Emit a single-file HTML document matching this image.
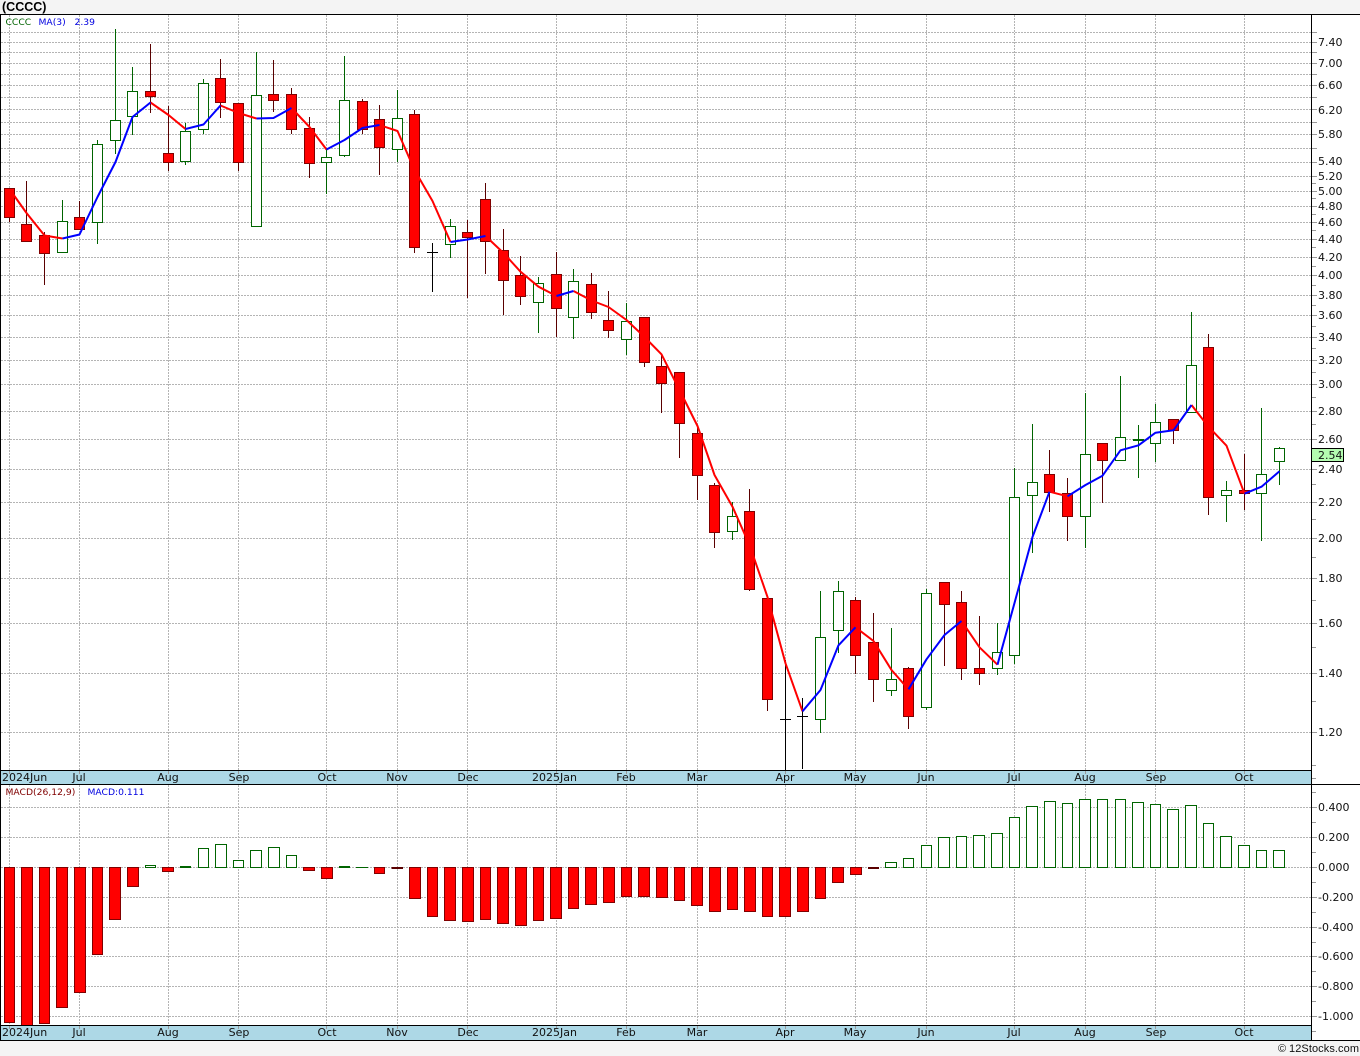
<!DOCTYPE html>
<html><head><meta charset="utf-8"><title>(CCCC)</title>
<style>
html,body{margin:0;padding:0;background:#f4f4f4;overflow:hidden}
svg{display:block}
text{font-family:"DejaVu Sans",sans-serif;font-size:11px;fill:#111}
.s text{font-size:9.2px}
</style></head><body>
<svg width="1360" height="1056" viewBox="0 0 1360 1056" xmlns="http://www.w3.org/2000/svg">
<rect width="1360" height="1056" fill="#f4f4f4"/>
<rect x="0" y="14" width="1360" height="1027" fill="#fff"/>
<g shape-rendering="crispEdges">
<!-- horizontal grid price -->
<path fill="none" stroke="#b4b4b4" stroke-dasharray="2 1" d="M1 32.5H1311M1 42.5H1311M1 52.5H1311M1 63.5H1311M1 74.5H1311M1 85.5H1311M1 97.5H1311M1 109.5H1311M1 122.5H1311M1 134.5H1311M1 148.5H1311M1 162.5H1311M1 176.5H1311M1 191.5H1311M1 206.5H1311M1 222.5H1311M1 239.5H1311M1 257.5H1311M1 275.5H1311M1 295.5H1311M1 315.5H1311M1 337.5H1311M1 360.5H1311M1 384.5H1311M1 411.5H1311M1 439.5H1311M1 469.5H1311M1 502.5H1311M1 538.5H1311M1 578.5H1311M1 623.5H1311M1 673.5H1311M1 732.5H1311
M1 807.5H1311M1 837.5H1311M1 867.5H1311M1 897.5H1311M1 927.5H1311M1 956.5H1311M1 986.5H1311M1 1016.5H1311"/>
<!-- vertical grid -->
<path fill="none" stroke="#b4b4b4" stroke-dasharray="2 1" d="M9.5 15V770M79.5 15V770M168.5 15V770M238.5 15V770M326.5 15V770M397.5 15V770M467.5 15V770M556.5 15V770M626.5 15V770M697.5 15V770M785.5 15V770M855.5 15V770M926.5 15V770M1014.5 15V770M1085.5 15V770M1155.5 15V770M1244.5 15V770
M9.5 785V1025M79.5 785V1025M168.5 785V1025M238.5 785V1025M326.5 785V1025M397.5 785V1025M467.5 785V1025M556.5 785V1025M626.5 785V1025M697.5 785V1025M785.5 785V1025M855.5 785V1025M926.5 785V1025M1014.5 785V1025M1085.5 785V1025M1155.5 785V1025M1244.5 785V1025"/>
<!-- wicks -->
<path fill="none" stroke="#5a0000" d="M9.5 188V222M26.5 181V241M44.5 232V285M79.5 201V230M150.5 44V113M168.5 106V171M220.5 59V118M238.5 103V171M273.5 60V112M291.5 88V134M309.5 117V178M362.5 99V134M379.5 105V175M414.5 110V253M467.5 220V298M485.5 183V274M503.5 229V315M520.5 256V305M556.5 252V337M591.5 273V319M608.5 291V338M644.5 317V367M661.5 355V413M679.5 372V458M697.5 427V500M714.5 483V548M749.5 489V591M767.5 598V711M855.5 597V674M873.5 613V702M908.5 667V729M944.5 582V666M961.5 591V680M979.5 616V685M1049.5 450V512M1067.5 478V541M1102.5 443V503M1173.5 419V444M1208.5 334V515M1244.5 454V510"/>
<path fill="none" stroke="#006400" d="M62.5 200V252M97.5 140V244M115.5 29V154M132.5 67V135M185.5 123V165M203.5 79V134M256.5 52V226M326.5 148V194M344.5 56V157M397.5 90V162M450.5 219V258M538.5 277V333M573.5 269V339M626.5 303V355M732.5 502V540M820.5 591V733M838.5 581V653M891.5 628V696M926.5 589V710M997.5 623V675M1014.5 468V664M1032.5 424V553M1085.5 393V548M1120.5 376V460M1138.5 425V478M1155.5 404V462M1191.5 312V413M1226.5 481V522M1261.5 408V541M1279.5 447V485"/>
<path fill="none" stroke="#000" d="M432.5 243V292M427 252.5H438M785.5 660V770M780 719.5H791M802.5 698V769M797 716.5H808"/>
<!-- red bodies -->
<path fill="#f00" stroke="#800000" d="M4.5 188.5h10v29h-10zM21.5 224.5h10v17h-10zM39.5 235.5h10v18h-10zM74.5 217.5h10v12h-10zM145.5 91.5h10v5h-10zM163.5 153.5h10v9h-10zM215.5 78.5h10v24h-10zM233.5 103.5h10v59h-10zM268.5 94.5h10v6h-10zM286.5 94.5h10v35h-10zM304.5 128.5h10v35h-10zM357.5 101.5h10v28h-10zM374.5 119.5h10v28h-10zM409.5 114.5h10v133h-10zM462.5 232.5h10v5h-10zM480.5 199.5h10v42h-10zM498.5 250.5h10v30h-10zM515.5 275.5h10v21h-10zM551.5 274.5h10v34h-10zM586.5 284.5h10v28h-10zM603.5 320.5h10v10h-10zM639.5 317.5h10v45h-10zM656.5 366.5h10v17h-10zM674.5 372.5h10v51h-10zM692.5 433.5h10v42h-10zM709.5 485.5h10v47h-10zM744.5 511.5h10v78h-10zM762.5 598.5h10v101h-10zM850.5 600.5h10v55h-10zM868.5 642.5h10v37h-10zM903.5 668.5h10v48h-10zM939.5 582.5h10v22h-10zM956.5 602.5h10v66h-10zM974.5 668.5h10v5h-10zM1044.5 474.5h10v18h-10zM1062.5 493.5h10v23h-10zM1097.5 443.5h10v17h-10zM1168.5 419.5h10v11h-10zM1203.5 347.5h10v150h-10zM1239.5 490.5h10v3h-10z"/>
<!-- green bodies -->
<path fill="#fff" stroke="#006400" d="M57.5 221.5h10v31h-10zM92.5 144.5h10v78h-10zM110.5 120.5h10v20h-10zM127.5 91.5h10v25h-10zM180.5 131.5h10v30h-10zM198.5 83.5h10v46h-10zM251.5 95.5h10v131h-10zM321.5 157.5h10v5h-10zM339.5 100.5h10v55h-10zM392.5 118.5h10v31h-10zM445.5 226.5h10v18h-10zM533.5 283.5h10v19h-10zM568.5 281.5h10v36h-10zM621.5 321.5h10v18h-10zM727.5 516.5h10v15h-10zM815.5 637.5h10v82h-10zM833.5 591.5h10v39h-10zM886.5 679.5h10v11h-10zM921.5 593.5h10v114h-10zM992.5 652.5h10v16h-10zM1009.5 497.5h10v158h-10zM1027.5 482.5h10v13h-10zM1080.5 454.5h10v62h-10zM1115.5 437.5h10v23h-10zM1150.5 422.5h10v21h-10zM1186.5 365.5h10v47h-10zM1221.5 490.5h10v5h-10zM1256.5 474.5h10v19h-10zM1274.5 448.5h10v13h-10z"/>
<path fill="none" stroke="#006400" stroke-width="2" d="M1133 440H1144"/>
<!-- MACD red -->
<path fill="#f00" stroke="#800000" d="M4.5 867.5H14.5V1022.5H4.5zM21.5 867.5H32.5V1026H21.5zM39.5 867.5H49.5V1023.5H39.5zM56.5 867.5H67.5V1007.5H56.5zM74.5 867.5H85.5V992.5H74.5zM92.5 867.5H102.5V954.5H92.5zM109.5 867.5H120.5V919.5H109.5zM127.5 867.5H138.5V886.5H127.5zM162.5 867.5H173.5V871.5H162.5zM303.5 867.5H314.5V870.5H303.5zM321.5 867.5H332.5V878.5H321.5zM374.5 867.5H384.5V873.5H374.5zM409.5 867.5H420.5V898.5H409.5zM427.5 867.5H437.5V916.5H427.5zM444.5 867.5H455.5V920.5H444.5zM462.5 867.5H473.5V921.5H462.5zM480.5 867.5H490.5V919.5H480.5zM497.5 867.5H508.5V923.5H497.5zM515.5 867.5H526.5V925.5H515.5zM533.5 867.5H543.5V920.5H533.5zM550.5 867.5H561.5V918.5H550.5zM568.5 867.5H578.5V908.5H568.5zM585.5 867.5H596.5V904.5H585.5zM603.5 867.5H614.5V902.5H603.5zM621.5 867.5H631.5V896.5H621.5zM638.5 867.5H649.5V896.5H638.5zM656.5 867.5H667.5V897.5H656.5zM674.5 867.5H684.5V900.5H674.5zM691.5 867.5H702.5V905.5H691.5zM709.5 867.5H720.5V911.5H709.5zM727.5 867.5H737.5V909.5H727.5zM744.5 867.5H755.5V911.5H744.5zM762.5 867.5H772.5V916.5H762.5zM779.5 867.5H790.5V916.5H779.5zM797.5 867.5H808.5V911.5H797.5zM815.5 867.5H825.5V898.5H815.5zM832.5 867.5H843.5V882.5H832.5zM850.5 867.5H861.5V874.5H850.5z"/>
<path fill="none" stroke="#5a0000" stroke-width="2" d="M391.5 868H403M868 868H879"/>
<!-- MACD green -->
<path fill="#fff" stroke="#006400" d="M145.5 865.5H155.5V867.5H145.5zM198.5 848.5H208.5V867.5H198.5zM215.5 844.5H226.5V867.5H215.5zM233.5 860.5H243.5V867.5H233.5zM250.5 850.5H261.5V867.5H250.5zM268.5 847.5H279.5V867.5H268.5zM286.5 855.5H296.5V867.5H286.5zM885.5 862.5H896.5V867.5H885.5zM903.5 858.5H913.5V867.5H903.5zM921.5 845.5H931.5V867.5H921.5zM938.5 837.5H949.5V867.5H938.5zM956.5 836.5H966.5V867.5H956.5zM973.5 835.5H984.5V867.5H973.5zM991.5 833.5H1002.5V867.5H991.5zM1009.5 817.5H1019.5V867.5H1009.5zM1026.5 806.5H1037.5V867.5H1026.5zM1044.5 801.5H1055.5V867.5H1044.5zM1062.5 803.5H1072.5V867.5H1062.5zM1079.5 799.5H1090.5V867.5H1079.5zM1097.5 799.5H1107.5V867.5H1097.5zM1115.5 799.5H1125.5V867.5H1115.5zM1132.5 802.5H1143.5V867.5H1132.5zM1150.5 804.5H1160.5V867.5H1150.5zM1167.5 809.5H1178.5V867.5H1167.5zM1185.5 805.5H1196.5V867.5H1185.5zM1203.5 823.5H1213.5V867.5H1203.5zM1220.5 836.5H1231.5V867.5H1220.5zM1238.5 845.5H1249.5V867.5H1238.5zM1256.5 850.5H1266.5V867.5H1256.5zM1273.5 850.5H1284.5V867.5H1273.5z"/>
<path fill="none" stroke="#006400" stroke-width="2" d="M180 867H191M339 867H350"/>
<path fill="none" stroke="#006400" d="M356 867.5H368"/>
</g>
<!-- MA lines -->
<g fill="none" stroke-width="2" stroke-linejoin="round" stroke-linecap="butt">
<g stroke="#f00">
<polyline points="13,194 26.5,213 44.5,235.5 62.5,238.5"/>
<polyline points="150.5,102.5 168.5,115 185.5,129"/>
<polyline points="220.5,105.5 238.5,113 256.5,118.5"/>
<polyline points="291.5,108 309.5,127 326.5,149.5"/>
<polyline points="379.5,125 397.5,131 414.5,170 432.5,201 450.5,242"/>
<polyline points="485.5,236 503.5,253 520.5,271.7 538.5,286.7 556.5,296"/>
<polyline points="573.5,291 591.5,300.5 608.5,307 626.5,320 644.5,337 661.5,354.3 679.5,390 697.5,426 714.5,475 732.5,506.7 749.5,545 767.5,597 785.5,663.3 802.5,711.3"/>
<polyline points="855.5,627.3 873.5,641 891.5,670 908.5,689.3"/>
<polyline points="961.5,621 979.5,647.3 997.5,664.7"/>
<polyline points="1049.5,491.7 1067.5,496.3"/>
<polyline points="1191.5,405 1208.5,426.7 1226.5,445.7 1244.5,493.7"/>
</g>
<g stroke="#00f">
<polyline points="62.5,238.5 79.5,234.5 97.5,197 115.5,162 132.5,117 150.5,102.5"/>
<polyline points="185.5,129 203.5,124.5 220.5,105.5"/>
<polyline points="256.5,118.5 273.5,118 291.5,108"/>
<polyline points="326.5,149.5 344.5,140 362.5,128 379.5,125"/>
<polyline points="450.5,242 467.5,239.5 485.5,236"/>
<polyline points="556.5,296 573.5,291"/>
<polyline points="802.5,711.3 820.5,690 838.5,645.3 855.5,627.3"/>
<polyline points="908.5,689.3 926.5,659.3 944.5,635 961.5,621"/>
<polyline points="997.5,664.7 1014.5,603 1032.5,537 1049.5,491.7"/>
<polyline points="1067.5,496.3 1085.5,485 1102.5,475.7 1120.5,450.3 1138.5,445.3 1155.5,432.7 1173.5,430.3 1191.5,405"/>
<polyline points="1244.5,493.7 1261.5,486.7 1279.5,471.3"/>
</g>
</g>
<g shape-rendering="crispEdges">
<!-- date bars -->
<rect x="1" y="771" width="1310" height="13" fill="#add8e6"/>
<rect x="1" y="1026" width="1310" height="14" fill="#add8e6"/>
<path fill="none" stroke="#999" d="M9.5 771V774M79.5 771V774M168.5 771V774M238.5 771V774M326.5 771V774M397.5 771V774M467.5 771V774M556.5 771V774M626.5 771V774M697.5 771V774M785.5 771V774M855.5 771V774M926.5 771V774M1014.5 771V774M1085.5 771V774M1155.5 771V774M1244.5 771V774M9.5 1026V1029M79.5 1026V1029M168.5 1026V1029M238.5 1026V1029M326.5 1026V1029M397.5 1026V1029M467.5 1026V1029M556.5 1026V1029M626.5 1026V1029M697.5 1026V1029M785.5 1026V1029M855.5 1026V1029M926.5 1026V1029M1014.5 1026V1029M1085.5 1026V1029M1155.5 1026V1029M1244.5 1026V1029"/>
<!-- axis ticks -->
<path fill="none" stroke="#999" d="M1312 32.5H1317M1312 42.5H1317M1312 52.5H1317M1312 63.5H1317M1312 74.5H1317M1312 85.5H1317M1312 97.5H1317M1312 109.5H1317M1312 122.5H1317M1312 134.5H1317M1312 148.5H1317M1312 162.5H1317M1312 176.5H1317M1312 191.5H1317M1312 206.5H1317M1312 222.5H1317M1312 239.5H1317M1312 257.5H1317M1312 275.5H1317M1312 295.5H1317M1312 315.5H1317M1312 337.5H1317M1312 360.5H1317M1312 384.5H1317M1312 411.5H1317M1312 439.5H1317M1312 469.5H1317M1312 502.5H1317M1312 538.5H1317M1312 578.5H1317M1312 623.5H1317M1312 673.5H1317M1312 732.5H1317
M1312 183.5H1316M1312 198.5H1316M1312 214.5H1316M1312 230.5H1316M1312 247.5H1316M1312 266.5H1316M1312 285.5H1316M1312 305.5H1316M1312 326.5H1316M1312 348.5H1316M1312 372.5H1316M1312 397.5H1316M1312 424.5H1316M1312 453.5H1316M1312 484.5H1316M1312 519.5H1316M1312 557.5H1316M1312 600.5H1316M1312 647.5H1316M1312 701.5H1316M1312 765.5H1316M1312 778.5H1316
M1312 807.5H1317M1312 837.5H1317M1312 867.5H1317M1312 897.5H1317M1312 927.5H1317M1312 956.5H1317M1312 986.5H1317M1312 1016.5H1317M1312 792.5H1316M1312 822.5H1316M1312 852.5H1316M1312 882.5H1316M1312 912.5H1316M1312 942.5H1316M1312 971.5H1316M1312 1001.5H1316M1312 1031.5H1316"/>
<!-- frame -->
<path fill="none" stroke="#000" d="M0 14.5H1360M0.5 14V1041M1311.5 14V1041M0 784.5H1360M0 1040.5H1360M1 770.5H1312M1 1025.5H1312"/>
<rect x="1311.5" y="448.5" width="32" height="13" fill="#b4fcb0" stroke="#000"/>
</g>
<!-- title -->
<text x="2" y="11" style="font-family:'Liberation Sans',sans-serif;font-size:12.5px;font-weight:bold;fill:#000">(CCCC)</text>
<g class="s">
<text x="5.5" y="25" style="fill:#006400">CCCC</text>
<text x="38.5" y="25" style="fill:#0000e0">MA(3)</text>
<text x="74.5" y="25" style="fill:#0000e0">2.39</text>
<text x="5.5" y="795" style="fill:#800000">MACD(26,12,9)</text>
<text x="87.5" y="795" style="fill:#0000e0">MACD:0.111</text>
</g>
<!-- price labels -->
<g>
<text x="1318" y="46">7.40</text><text x="1318" y="67">7.00</text><text x="1318" y="89">6.60</text><text x="1318" y="114">6.20</text><text x="1318" y="138">5.80</text><text x="1318" y="165">5.40</text><text x="1318" y="180">5.20</text><text x="1318" y="195">5.00</text><text x="1318" y="210">4.80</text><text x="1318" y="226">4.60</text><text x="1318" y="243">4.40</text><text x="1318" y="261">4.20</text><text x="1318" y="279">4.00</text><text x="1318" y="299">3.80</text><text x="1318" y="319">3.60</text><text x="1318" y="341">3.40</text><text x="1318" y="364">3.20</text><text x="1318" y="388">3.00</text><text x="1318" y="415">2.80</text><text x="1318" y="443">2.60</text><text x="1318" y="473">2.40</text><text x="1318" y="506">2.20</text><text x="1318" y="542">2.00</text><text x="1318" y="582">1.80</text><text x="1318" y="627">1.60</text><text x="1318" y="677">1.40</text><text x="1318" y="736">1.20</text>
<text x="1318" y="459">2.54</text>
<text x="1318" y="811">0.400</text><text x="1318" y="841">0.200</text><text x="1318" y="871">0.000</text><text x="1318" y="901">-0.200</text><text x="1318" y="931">-0.400</text><text x="1318" y="960">-0.600</text><text x="1318" y="990">-0.800</text><text x="1318" y="1020">-1.000</text>
</g>
<!-- date labels -->
<g text-anchor="middle">
<text x="79" y="781">Jul</text><text x="168" y="781">Aug</text><text x="239" y="781">Sep</text><text x="327" y="781">Oct</text><text x="397" y="781">Nov</text><text x="468" y="781">Dec</text><text x="626" y="781">Feb</text><text x="697" y="781">Mar</text><text x="785" y="781">Apr</text><text x="855" y="781">May</text><text x="926" y="781">Jun</text><text x="1014" y="781">Jul</text><text x="1085" y="781">Aug</text><text x="1156" y="781">Sep</text><text x="1244" y="781">Oct</text>
<text x="79" y="1036">Jul</text><text x="168" y="1036">Aug</text><text x="239" y="1036">Sep</text><text x="327" y="1036">Oct</text><text x="397" y="1036">Nov</text><text x="468" y="1036">Dec</text><text x="626" y="1036">Feb</text><text x="697" y="1036">Mar</text><text x="785" y="1036">Apr</text><text x="855" y="1036">May</text><text x="926" y="1036">Jun</text><text x="1014" y="1036">Jul</text><text x="1085" y="1036">Aug</text><text x="1156" y="1036">Sep</text><text x="1244" y="1036">Oct</text>
</g>
<text x="2" y="781">2024Jun</text><text x="2" y="1036">2024Jun</text>
<text x="532" y="781">2025Jan</text><text x="532" y="1036">2025Jan</text>
<text x="1278" y="1052" style="font-family:'Liberation Sans',sans-serif;font-size:11px;fill:#111">©</text>
<text x="1289" y="1052" textLength="70" style="font-family:'Liberation Sans',sans-serif;font-size:11px;fill:#111">12Stocks.com</text>
</svg>
</body></html>
